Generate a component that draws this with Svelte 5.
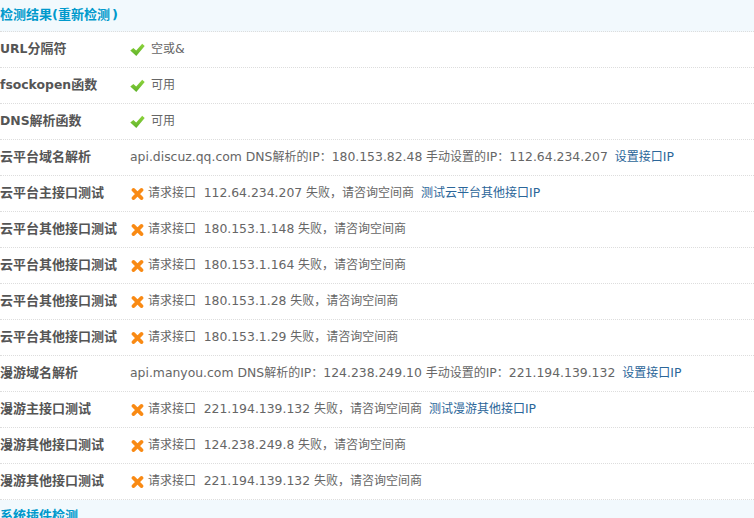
<script>
  const rows = [
    { label: 'URL分隔符', ok: true, text: '空或&' },
    { label: 'fsockopen函数', ok: true, text: '可用' },
    { label: 'DNS解析函数', ok: true, text: '可用' },
    { label: '云平台域名解析', text: 'api.discuz.qq.com DNS解析的IP：180.153.82.48 手动设置的IP：112.64.234.207', link: '设置接口IP' },
    { label: '云平台主接口测试', ok: false, text: '请求接口  112.64.234.207 失败，请咨询空间商', link: '测试云平台其他接口IP' },
    { label: '云平台其他接口测试', ok: false, text: '请求接口  180.153.1.148 失败，请咨询空间商' },
    { label: '云平台其他接口测试', ok: false, text: '请求接口  180.153.1.164 失败，请咨询空间商' },
    { label: '云平台其他接口测试', ok: false, text: '请求接口  180.153.1.28 失败，请咨询空间商' },
    { label: '云平台其他接口测试', ok: false, text: '请求接口  180.153.1.29 失败，请咨询空间商' },
    { label: '漫游域名解析', text: 'api.manyou.com DNS解析的IP：124.238.249.10 手动设置的IP：221.194.139.132', link: '设置接口IP' },
    { label: '漫游主接口测试', ok: false, text: '请求接口  221.194.139.132 失败，请咨询空间商', link: '测试漫游其他接口IP' },
    { label: '漫游其他接口测试', ok: false, text: '请求接口  124.238.249.8 失败，请咨询空间商' },
    { label: '漫游其他接口测试', ok: false, text: '请求接口  221.194.139.132 失败，请咨询空间商' }
  ];

  // latin runs are set a touch larger than the CJK around them
  const parts = (s) => s.split(/([\x21-\x7e]+(?: [\x21-\x7e]+)*)/).filter(Boolean);
  const isLatin = (s) => /^[\x21-\x7e]/.test(s);
</script>

{#snippet mixed(s)}
  {#each parts(s) as p}{#if isLatin(p)}<span class="latin">{p}</span>{:else}{p}{/if}{/each}
{/snippet}

<main>
  <h3>检测结果<span class="paren">(</span><a href="#recheck">重新检测</a><span class="paren close">)</span></h3>
  {#each rows as row}
    <div class="row">
      <strong>{@render mixed(row.label)}</strong>
      <div class="value">
        {#if row.ok === true}
          <svg class="check" width="15" height="14" viewBox="0 0 15 14">
            <defs>
              <linearGradient id="tick" x1="0" y1="0" x2="0" y2="1">
                <stop offset="0" stop-color="#8ed43c" />
                <stop offset="1" stop-color="#5fb22a" />
              </linearGradient>
            </defs>
            <path d="M0.3 7.6 L3.4 5 L6.2 7.4 L12.2 0.8 L14.7 3 L6.3 13 Z" fill="url(#tick)" />
          </svg>
        {:else if row.ok === false}
          <svg class="cross" width="13" height="14" viewBox="0 0 13 14">
            <path d="M2.6 3 L10.4 11 M10.4 3 L2.6 11" stroke="#f98a14" stroke-width="3.9" stroke-linecap="round" />
          </svg>
        {/if}
        <span class="text">{@render mixed(row.text)}</span>
        {#if row.link}<a href="#link">{@render mixed(row.link)}</a>{/if}
      </div>
    </div>
  {/each}
  <h3 class="next">系统插件检测</h3>
</main>

<style>
  :global(body) {
    margin: 0;
    background: #fff;
    overflow: hidden;
  }

  main {
    height: 518px;
    overflow: hidden;
    font: 12px/18px Tahoma, "DejaVu Sans", "Noto Sans CJK SC", sans-serif;
    color: #666;
  }

  h3 {
    margin: 0;
    height: 31px;
    line-height: 29px;
    font-size: 13px;
    font-weight: bold;
    color: #09c;
    background: #f2f9fd;
    border-bottom: 1px dotted #ddd;
  }

  h3 a {
    color: #09c;
    text-decoration: none;
  }

  .paren.close {
    margin-left: 2px;
  }

  h3.next {
    height: 19px;
    border: 0;
    line-height: 31px;
  }

  .row {
    display: flex;
    align-items: center;
    height: 35px;
    border-bottom: 1px dotted #ddd;
  }

  strong {
    width: 130px;
    flex: none;
    font-size: 13px;
    color: #555;
    position: relative;
    top: -1px;
  }

  .latin {
    font-size: 12.4px;
  }

  .value {
    display: flex;
    align-items: center;
    white-space: pre;
  }

  .text,
  .value a {
    position: relative;
    top: -1px;
  }

  .check {
    margin-right: 6px;
  }

  .cross {
    margin: 0 4px 0 1px;
  }

  .value a {
    margin-left: 7px;
    color: #2b6699;
    text-decoration: none;
  }
</style>
